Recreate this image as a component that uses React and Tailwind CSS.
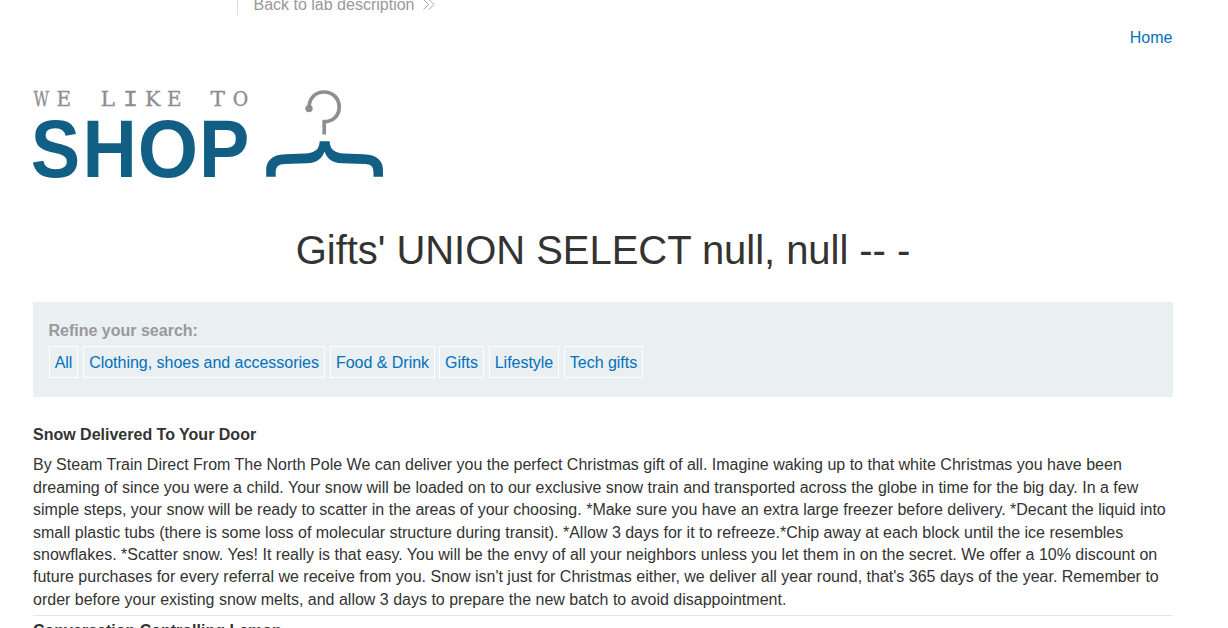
const categories = [
  ['All', 'w-[29px]'],
  ['Clothing, shoes and accessories', 'w-[242px]'],
  ['Food & Drink', 'w-[105px]'],
  ['Gifts', 'w-[45px] -ml-px'],
  ['Lifestyle', 'w-[70px]'],
  ['Tech gifts', 'w-[79px]'],
];

const tagline = [
  ['W', 33.5, 15.5],
  ['E', 56.5, 14.5],
  ['L', 100.5, 14.5],
  ['I', 122.9, 15],
  ['K', 145, 15.5],
  ['E', 167, 14.5],
  ['T', 210.5, 14.5],
  ['O', 232.8, 15.5],
];

const shop = [
  ['S', 30.8, 49.4],
  ['H', 82.4, 54.4],
  ['O', 137.8, 60.4],
  ['P', 199, 50.4],
];

const snowLines = [
  'By Steam Train Direct From The North Pole We can deliver you the perfect Christmas gift of all. Imagine waking up to that white Christmas you have been',
  'dreaming of since you were a child. Your snow will be loaded on to our exclusive snow train and transported across the globe in time for the big day. In a few',
  'simple steps, your snow will be ready to scatter in the areas of your choosing. *Make sure you have an extra large freezer before delivery. *Decant the liquid into',
  'small plastic tubs (there is some loss of molecular structure during transit). *Allow 3 days for it to refreeze.*Chip away at each block until the ice resembles',
  'snowflakes. *Scatter snow. Yes! It really is that easy. You will be the envy of all your neighbors unless you let them in on the secret. We offer a 10% discount on',
  "future purchases for every referral we receive from you. Snow isn't just for Christmas either, we deliver all year round, that's 365 days of the year. Remember to",
  'order before your existing snow melts, and allow 3 days to prepare the new batch to avoid disappointment.',
];

function Logo() {
  return (
    <svg className="block h-[90px] w-[352px] overflow-visible" viewBox="33 89 352 90" role="img" aria-label="We like to shop">
      <g fill="#8c8e90" stroke="#8c8e90" strokeWidth="0.3" fontSize="20">
        {tagline.map(([letter, x, width], i) => (
          <text
            key={i}
            x={x}
            y="105.5"
            textLength={width}
            lengthAdjust="spacingAndGlyphs"
            fontSize={letter === 'I' ? 22 : 20}
            fontFamily={letter === 'I' ? "'Liberation Mono', monospace" : "'DejaVu Serif', serif"}
          >
            {letter}
          </text>
        ))}
      </g>
      <g fill="#115f85" fontFamily="'Liberation Sans', Arial, sans-serif" fontWeight="700" fontSize="81">
        {shop.map(([letter, x, width]) => (
          <text key={letter} x={x} y="176.8" textLength={width} lengthAdjust="spacingAndGlyphs">{letter}</text>
        ))}
      </g>
      <path d="M309 108C309 98 315.5 92 324 92C333 92 339.2 98.7 339.2 107C339.2 116 332.5 121.7 324.2 121.7V134.5" fill="none" stroke="#8c8e90" strokeWidth="3.7" />
      <circle cx="309" cy="108.6" r="3.7" fill="#8c8e90" />
      <path d="M319.7 141.3H329.6C330 149.5 334.5 153.2 344 153.5L364 154.2C377 154.5 383 161 383 170V176.7H373.5V173C373.5 166.5 371 164.3 365 164.1L342 163.3C332 163 326.5 158 324.5 151.5C322.5 158 317 163 307 163.3L285 164.1C278.5 164.3 275.7 166.5 275.7 173V176.7H266.2V170C266.2 161 272 154.5 285 154.2L305 153.5C315 153.2 319.3 149.5 319.7 141.3Z" fill="#115f85" />
    </svg>
  );
}

export default function App() {
  return (
    <div className="h-[628px] overflow-hidden bg-white font-['Liberation_Sans',Arial,sans-serif] text-base leading-[22.4px] text-[#333332]">
      <header className="ml-[237px] flex h-[15px] items-end border-l border-[#dddddd] pl-[15.5px] text-[#999999]">
        <a className="-mb-px flex h-[22px] items-center whitespace-nowrap">
          Back to lab description
          <svg className="mb-0.5 ml-[8.5px] h-[11px] w-3" viewBox="0 0 12 11" fill="none" stroke="currentColor" strokeWidth="0.9">
            <path d="M.5.5 5.5 5.5.5 10.5M6 .5 11 5.5 6 10.5" />
          </svg>
        </a>
      </header>
      <main className="ml-[33px] mr-[55px]">
        <nav className="flex h-[74px] justify-end pt-3 pr-[0.5px] text-[#0071bc]">
          <a>Home</a>
        </nav>
        <Logo />
        <h1 className="mt-[43px] h-[80px] text-center text-[40px] leading-[56px] tracking-[-0.04px]">Gifts' UNION SELECT null, null -- -</h1>
        <section className="h-[95px] bg-[#eaeff2] pl-4 pt-[18px]">
          <p className="-ml-[0.5px] font-bold text-[#999999]">Refine your search:</p>
          <div className="mt-[3.6px] flex gap-[5px] text-[#0071bc]">
            {categories.map(([name, width]) => (
              <a key={name} className={`flex h-8 shrink-0 justify-center whitespace-nowrap border border-white leading-8 tracking-[-0.02px] ${width}`}>{name}</a>
            ))}
          </div>
        </section>
        <article className="border-b border-[#e5e5e5] pt-[27px] pb-1">
          <h2 className="mb-2 font-bold">Snow Delivered To Your Door</h2>
          <div>
            {snowLines.map((line) => (
              <p key={line} className="whitespace-nowrap">{line}</p>
            ))}
          </div>
        </article>
        <article>
          <h2 className="pt-1 font-bold">Conversation Controlling Lemon</h2>
        </article>
      </main>
    </div>
  );
}
